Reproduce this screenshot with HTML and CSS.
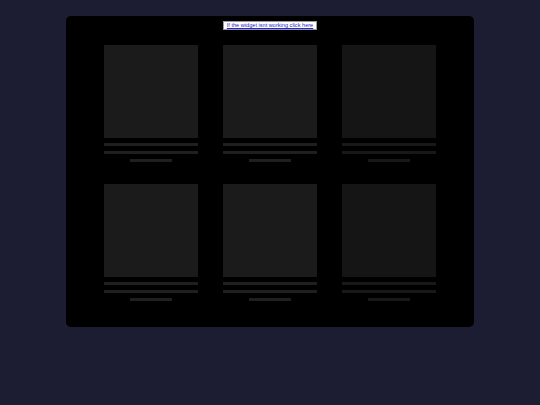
FILE: index.html
```html
<!DOCTYPE html>
<html>
<head>
<meta charset="utf-8">
<link rel="stylesheet" href="styles.css">
</head>
<body>
<div class="widget">
  <div class="notice"><a href="#" class="notice-link">If the widget isnt working click here</a></div>
  <div class="grid">
    <div class="card"><div class="thumb"></div><div class="line"></div><div class="line"></div><div class="line short"></div></div>
    <div class="card"><div class="thumb"></div><div class="line"></div><div class="line"></div><div class="line short"></div></div>
    <div class="card dim"><div class="thumb"></div><div class="line"></div><div class="line"></div><div class="line short"></div></div>
    <div class="card"><div class="thumb"></div><div class="line"></div><div class="line"></div><div class="line short"></div></div>
    <div class="card"><div class="thumb"></div><div class="line"></div><div class="line"></div><div class="line short"></div></div>
    <div class="card dim"><div class="thumb"></div><div class="line"></div><div class="line"></div><div class="line short"></div></div>
  </div>
</div>
</body>
</html>
```
FILE: styles.css
```css
html, body {
  margin: 0;
  padding: 0;
  background: #1c1c33;
  height: 100%;
}
body {
  padding-top: 16px;
  font-family: "Liberation Sans", Arial, sans-serif;
}
.widget {
  box-sizing: border-box;
  margin-left: 66px;
  width: 408px;
  height: 311px;
  background: #000;
  border-radius: 5px;
  padding-top: 5px;
}
.notice {
  display: flex;
  justify-content: center;
}
.notice-link {
  display: block;
  background: #fff;
  border: 1px solid #999;
  color: #2323d8;
  font-size: 5.6px;
  line-height: 7px;
  padding: 0 3px;
  text-decoration: underline;
}
.grid {
  display: grid;
  grid-template-columns: repeat(3, 94px);
  column-gap: 25px;
  row-gap: 22px;
  margin-top: 15px;
  margin-left: 38px;
}
.card {
  display: flex;
  flex-direction: column;
  align-items: center;
}
.thumb {
  width: 94px;
  height: 93px;
  background: #1b1b1b;
}
.line {
  width: 94px;
  height: 3px;
  margin-top: 5px;
  background: #1f1f1f;
}
.line.short {
  width: 42px;
}
.dim .thumb {
  background: #151515;
}
.dim .line {
  background: #181818;
}
```
